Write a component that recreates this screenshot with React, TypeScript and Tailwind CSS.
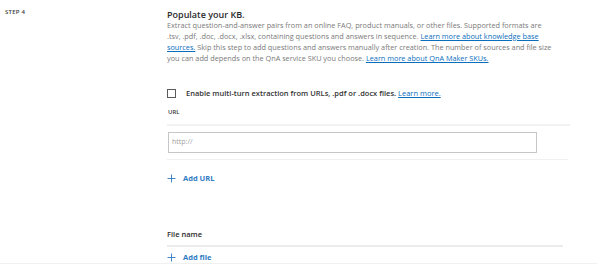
import React from "react";

function PlusIcon() {
  return (
    <svg width="9" height="9" viewBox="0 0 9 9" className="shrink-0">
      <path d="M4.5 0.5v8M0.5 4.5h8" stroke="#2f7bc4" strokeWidth="0.9" fill="none" />
    </svg>
  );
}

function Link({ children }: { children: React.ReactNode }) {
  return <a className="text-[#0a6ebd] underline underline-offset-1">{children}</a>;
}

export default function App() {
  return (
    <div className="w-[597px] h-[264px] bg-white flex border-b border-[#f0f0f0] font-['Open_Sans','Noto_Sans',sans-serif] overflow-hidden">
      <div className="w-[167px] shrink-0 pl-[5px] pt-[9px] text-[6px] leading-[7px] font-semibold tracking-[0.04em] text-[#3b3b3b]">
        STEP 4
      </div>

      <div className="w-[410px] flex flex-col">
        <h2 className="mt-[9px] text-[9px] leading-[11px] font-semibold text-[#2b2b2b]">Populate your KB.</h2>
        <p className="w-[405px] whitespace-nowrap text-[7.3px] leading-[11px] text-[#7a7a7a]">
          Extract question-and-answer pairs from an online FAQ, product manuals, or other files. Supported formats are
          <br />
          .tsv, .pdf, .doc, .docx, .xlsx, containing questions and answers in sequence.{" "}
          <Link>
            Learn more about knowledge base
            <br />
            sources.
          </Link>{" "}
          Skip this step to add questions and answers manually after creation. The number of sources and file size
          <br />
          you can add depends on the QnA service SKU you choose. <Link>Learn more about QnA Maker SKUs.</Link>
        </p>

        <div className="mt-[24px] flex items-start gap-[10px]">
          <span className="mt-[1px] w-[9px] h-[9px] border border-[#5a5a5a] bg-white shrink-0" />
          <span className="text-[7.5px] leading-[11px] font-semibold text-[#333]">
            Enable multi-turn extraction from URLs, .pdf or .docx files.{" "}
            <span className="font-normal">
              <Link>Learn more.</Link>
            </span>
          </span>
        </div>

        <div className="mt-[10px] ml-px text-[6px] leading-[7px] font-semibold text-[#3b3b3b]">URL</div>
        <div className="mt-[8px] w-[403px] h-[2px] bg-[#f2f2f2]" />

        <div className="mt-[6px] ml-px w-[369px] h-[21px] border border-[#c6c6c6] flex items-center pl-[3px] text-[7px] text-[#a0a0a0]">
          http://
        </div>
        <div className="mt-[6px] w-[401px] h-px bg-[#f0f0f0]" />

        <div className="mt-[13px] flex items-center gap-[7px]">
          <PlusIcon />
          <span className="text-[7.5px] leading-[11px] font-bold text-[#2f7bc4]">Add URL</span>
        </div>

        <div className="mt-[45px] text-[7.5px] leading-[11px] font-semibold text-[#2b2b2b]">File name</div>
        <div className="mt-[5px] w-[396px] h-[2px] bg-[#ececec]" />

        <div className="mt-[5px] flex items-center gap-[7px]">
          <PlusIcon />
          <span className="text-[7.5px] leading-[11px] font-bold text-[#2f7bc4]">Add file</span>
        </div>
      </div>
    </div>
  );
}
